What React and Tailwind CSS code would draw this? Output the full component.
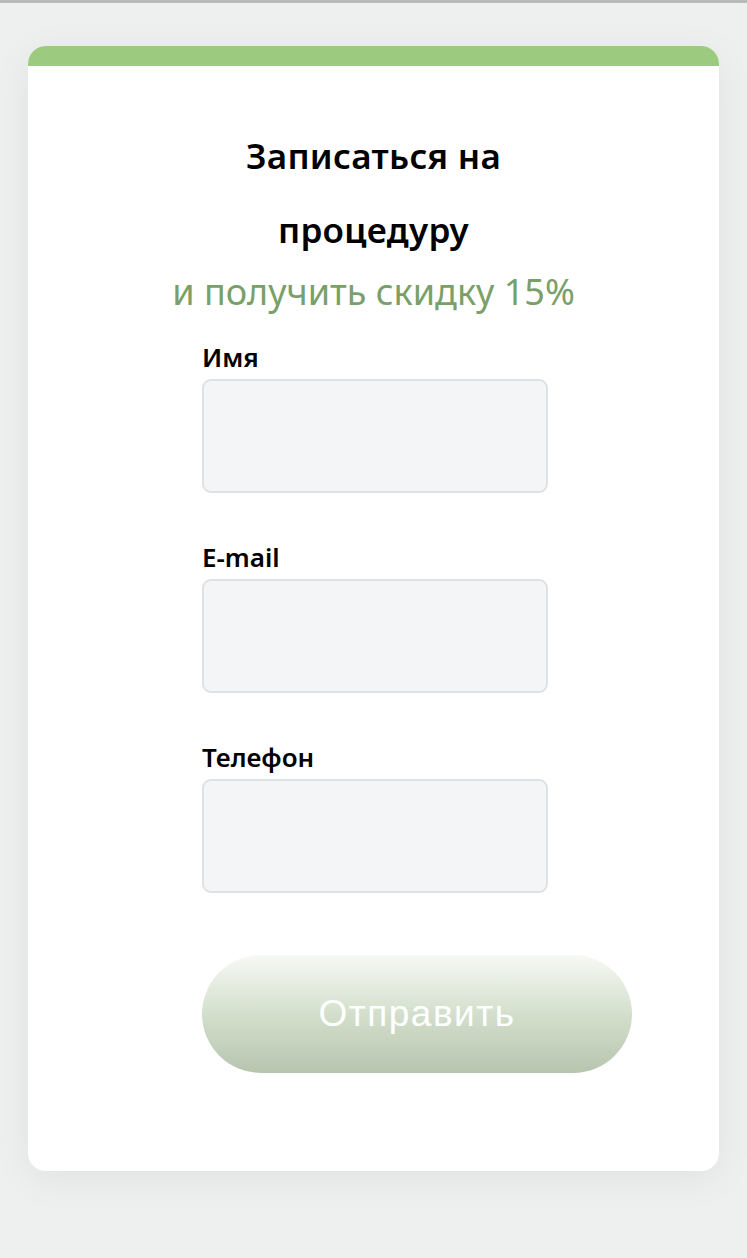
export default function App() {
  const fields = ['Имя', 'E-mail', 'Телефон']

  return (
    <div className="min-h-[1258px] border-t-[3px] border-[#b9b9b9] bg-[#eef0ef] pt-[43px] pb-[84px] font-['Noto_Sans',sans-serif]">
      <div className="mx-[28px] overflow-hidden rounded-[18px] bg-white shadow-[0_8px_40px_rgba(0,0,0,0.06)]">
        <div className="h-[20px] bg-[#9ccb80]" />

        <div className="px-[40px] pt-[53px] text-center">
          <h2 className="mx-auto max-w-[300px] text-[35px] leading-[74px] font-semibold tracking-[0.3px] text-black">
            Записаться на процедуру
          </h2>
          <p className="mt-[3px] text-[36px] leading-[44px] text-[#7aa069]">
            и получить скидку 15%
          </p>
        </div>

        <form className="flex flex-col pl-[174px] pb-[98px]">
          {fields.map((label, i) => (
            <label key={label} className={`flex flex-col ${i === 0 ? 'mt-[27px]' : 'mt-[48px]'}`}>
              <span className="text-[26px] leading-[32px] font-semibold text-black">{label}</span>
              <input
                type="text"
                className="mt-[6px] h-[114px] w-[346px] rounded-[9px] border-2 border-[#e0e1e3] bg-[#f4f5f7] outline-none"
              />
            </label>
          ))}

          <button
            type="button"
            className="mt-[62px] h-[118px] w-[430px] rounded-full bg-gradient-to-b from-[#f7f9f5] via-[#d3dfcc] to-[#b7c5af] font-['Liberation_Sans',sans-serif] text-[37px] tracking-[1.5px] text-white"
          >
            Отправить
          </button>
        </form>
      </div>
    </div>
  )
}
